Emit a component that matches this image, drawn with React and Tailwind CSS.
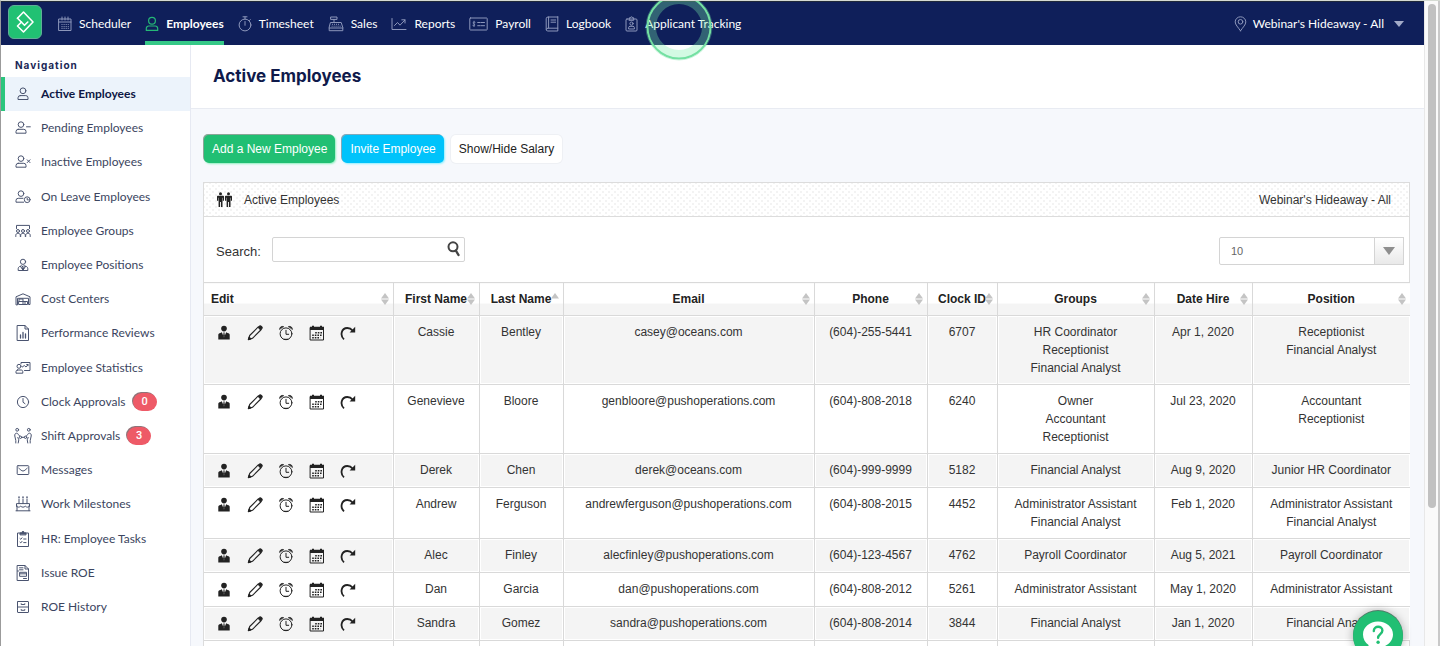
import React from "react";

function Svg({ w = 16, h = 16, sw = 1, className = "", children }) {
  return (
    <svg
      width={w}
      height={h}
      viewBox={`0 0 ${w} ${h}`}
      fill="none"
      stroke="currentColor"
      strokeWidth={sw}
      strokeLinecap="round"
      strokeLinejoin="round"
      aria-hidden="true"
      className={`shrink-0 ${className}`}
    >
      {children}
    </svg>
  );
}

/* Top bar icons */
const CalendarIcon = () => (
  <Svg w={14}>
    <path d="M1 3h12v11.5H1zM1 6h12M4 1v3M7 1v3M10 1v3" />
    <path d="M3.5 8.5h7.2M3.5 10.5h7.2M3.5 12.3h7.2" strokeDasharray="1 1.1" strokeLinecap="butt" strokeWidth="1.2" />
  </Svg>
);
const PersonIcon = () => (
  <Svg w={14} sw={1.2}>
    <circle cx="7" cy="4.8" r="3.4" />
    <path d="M3.7 10h6.6a2.4 2.4 0 0 1 2.4 2.4v2H1.3v-2A2.4 2.4 0 0 1 3.7 10z" />
  </Svg>
);
const StopwatchIcon = () => (
  <Svg w={14}>
    <circle cx="7" cy="9" r="5.9" />
    <path d="M5 .8h4M7 .8v2.3M7 5.5v3.8M11.3 4.6l1-1" />
  </Svg>
);
const RegisterIcon = () => (
  <Svg w={16}>
    <path d="M2.8 6.5h10.4l1.6 5v3.2H1.2v-3.2zM1.2 12h13.6M3 1h6v2.4H3zM6 3.4v3" />
    <path d="M4 8.3h8M3.6 10.2h9" strokeDasharray="1 1" strokeLinecap="butt" />
  </Svg>
);
const ChartIcon = () => (
  <Svg w={16}>
    <path d="M1 2.5v11h14" />
    <path d="M3.5 9.5l3-3 2.5 2.7L14 4M10.8 3.8H14V7" />
  </Svg>
);
const CheckIcon = () => (
  <Svg w={19}>
    <rect x=".8" y="2" width="17.4" height="12" rx=".6" />
    <path d="M6 6.2c-1.8-.8-2.6.9-1.2 1.6 1.6.7 1 2.6-.9 1.7M5 5.2v5.4" strokeWidth=".9" />
    <path d="M8.7 6.5h2.500M12.2 6.5h3.3M8.7 9.7h2.500M12.2 9.7h3.3" />
  </Svg>
);
const BookIcon = () => (
  <Svg w={14}>
    <path d="M12.8 1H3A1.8 1.8 0 0 0 1.2 2.8v10.4A1.6 1.6 0 0 0 2.8 15h10V1zM12.8 12.2H3a1.5 1.5 0 0 0-1.7 1.2M3.6 1v11M6 4h4.6M6 6.2h4.6" />
  </Svg>
);
const BadgeIcon = () => (
  <Svg w={13}>
    <rect x="1" y="3" width="11" height="12" rx="1" />
    <path d="M4.3 3V1.8h1.2a1 1 0 0 1 2 0h1.2V4.3H4.3z" />
    <circle cx="6.5" cy="7.6" r="1.6" />
    <path d="M3.6 12.6v-.9c0-.9.6-1.4 1.4-1.4h3c.8 0 1.4.5 1.4 1.4v.9z" />
  </Svg>
);
const PinIcon = () => (
  <Svg w={13}>
    <path d="M6.5 14.8C4 11.2 1.2 8.7 1.2 5.9a5.3 5.1 0 0 1 10.6 0c0 2.8-2.8 5.3-5.3 8.9z" />
    <circle cx="6.5" cy="5.8" r="2.3" />
  </Svg>
);

/* Sidebar icons, drawn on an 18px canvas */
const side = {
  active: (
    <>
      <circle cx="9" cy="5.8" r="2.9" />
      <path d="M6.2 10.6h5.6a2.2 2.2 0 0 1 2.2 2.2v1.7H4v-1.7a2.2 2.2 0 0 1 2.2-2.2z" />
    </>
  ),
  pending: (
    <>
      <circle cx="7" cy="5.6" r="2.8" />
      <path d="M4.2 10.3h5.6a2.2 2.2 0 0 1 2.2 2.2v1.7H2v-1.7a2.2 2.2 0 0 1 2.2-2.2zM12.5 7.8h3.8" />
    </>
  ),
  inactive: (
    <>
      <circle cx="7" cy="5.6" r="2.8" />
      <path d="M4.2 10.3h5.6a2.2 2.2 0 0 1 2.2 2.2v1.7H2v-1.7a2.2 2.2 0 0 1 2.2-2.2zM13.2 6.8l2.8 2.8M16 6.8l-2.8 2.8" />
    </>
  ),
  leave: (
    <>
      <circle cx="7" cy="5.6" r="2.8" />
      <path d="M9 10.3H4.2A2.2 2.2 0 0 0 2 12.5v1.7h7.6" />
      <circle cx="13.2" cy="11.7" r="2.9" />
      <path d="M13.2 10.2v1.7h1.2" />
    </>
  ),
  groups: (
    <>
      <path d="M2.5 6.5V3.4h13v3.1" />
      <circle cx="4" cy="9" r="1.5" />
      <circle cx="9" cy="9" r="1.5" />
      <circle cx="14" cy="9" r="1.5" />
      <path d="M1.8 14.5v-1.3c0-1 .7-1.7 1.5-1.7h1.4c.8 0 1.6.7 1.6 1.7v1.3M6.7 14.5v-1.3c0-1 .7-1.7 1.6-1.7h1.4c.9 0 1.6.7 1.6 1.7v1.3M11.7 14.5v-1.3c0-1 .7-1.7 1.6-1.7h1.4c.8 0 1.5.7 1.5 1.7v1.3" />
    </>
  ),
  positions: (
    <>
      <circle cx="9" cy="5.8" r="2.6" />
      <path d="M7.5 9.8L5.6 10.5C4.6 11 4.2 11.8 4.2 12.8v1.7h9.6v-1.7c0-1-.4-1.8-1.4-2.3l-1.9-.7M9 10l-1 1 1 3 1-3zM6.5 10.4L9 14.3l2.5-3.9" />
    </>
  ),
  cost: (
    <>
      <path d="M2 14.5V6.8L9 3.8l7 3v7.7h-1.5V8.3h-11v6.2z" />
      <path d="M5 14.5h8.5v-3H5zM5 11.5V9h4v5.5M11 11.5v3" />
    </>
  ),
  reviews: (
    <>
      <path d="M3.5 1.5h7.5l3.5 3.5v11.5h-11zM11 1.5V5h3.5" />
      <path d="M6.5 11v3M9 8.5V14M11.5 10v4" strokeWidth="1.3" />
    </>
  ),
  stats: (
    <>
      <path d="M7 4.8V3.5h9v8H10.5" />
      <circle cx="5" cy="7.3" r="2" />
      <path d="M3.5 11h3.6c1 0 1.7.7 1.7 1.7v1.5H2v-1.5C2 11.7 2.6 11 3.5 11zM8.3 8l2-1.5L12 8l2-2.3M12.7 5.5H14v1.3" />
    </>
  ),
  clock: (
    <>
      <circle cx="9" cy="9" r="5.6" />
      <path d="M9 5.5V9.2l2 1.5" />
    </>
  ),
  shift: (
    <>
      <circle cx="3.2" cy="2.8" r="1.4" />
      <circle cx="14.8" cy="2.8" r="1.4" />
      <path d="M1.8 16v-2.5L.8 9C.5 7.300 1.3 6.200 2.600 6.200c1 0 1.500.7 1.700 1.500L6 9.300M4.200 16l.6-3.200-1-2.300M16.200 16v-2.500l1-4.500c.3-1.700-.5-2.800-1.800-2.800-1 0-1.500.7-1.700 1.500L12 9.300M13.800 16l-.6-3.200 1-2.300" />
      <circle cx="6.500" cy="10.300" r="1.200" />
      <circle cx="11.500" cy="10.300" r="1.200" />
      <path d="M7.800 10.300h2.400" />
    </>
  ),
  mail: (
    <>
      <rect x="3.2" y="4.7" width="11.6" height="8.8" rx=".8" />
      <path d="M4.8 7.2c1.6 1.2 2.6 2.8 4.2 2.8s2.6-1.6 4.2-2.8" />
    </>
  ),
  cake: (
    <>
      <path d="M2.5 11.2V8.6h13v2.6M2 15.8h14M3 11v4.7M15 11v4.7M2.5 11.2c1.6 1.3 2.6 1.3 4.2 0 1.6 1.3 3 1.3 4.6 0 1.6 1.3 2.6 1.3 4.2 0M5 8.5V4M9 8.5V4M13 8.5V4" />
      <path d="M5 2.600V2M9 2.600V2M13 2.600V2" strokeWidth="1.5" />
    </>
  ),
  tasks: (
    <>
      <path d="M5.8 3H3.5v13.5h11V3h-2.3" />
      <path d="M6 4.5V2.8h1.7a1.3 1.3 0 0 1 2.6 0H12v1.7z" fill="currentColor" />
      <path d="M6 8.6l.8.7 1.2-1.5M6 12.2l.8.7 1.2-1.5M9.7 9h2.3M9.7 12.6h2.3" />
    </>
  ),
  roe: (
    <path d="M3.5 1.5h7.5l3.5 3.5v11.5h-11zM11 1.5V5h3.5M5.5 3.8H9M5.5 5.8H9M6 8.3h6.5v4H6zM6 9.8h6.5M9.5 14.5h3M3.5 7h1" />
  ),
  history: (
    <>
      <rect x="3.5" y="3.5" width="11" height="11" rx=".5" />
      <path d="M3.5 9h11M7.2 5.7v.8h3.600v-.8M7.2 11.5v.8h3.600v-.8" />
    </>
  ),
};

const TOP_NAV = [
  { label: "Scheduler", icon: <CalendarIcon /> },
  { label: "Employees", icon: <PersonIcon />, active: true },
  { label: "Timesheet", icon: <StopwatchIcon /> },
  { label: "Sales", icon: <RegisterIcon /> },
  { label: "Reports", icon: <ChartIcon /> },
  { label: "Payroll", icon: <CheckIcon /> },
  { label: "Logbook", icon: <BookIcon /> },
  { label: "Applicant Tracking", icon: <BadgeIcon /> },
];

const SIDE_NAV = [
  ["active", "Active Employees"],
  ["pending", "Pending Employees"],
  ["inactive", "Inactive Employees"],
  ["leave", "On Leave Employees"],
  ["groups", "Employee Groups"],
  ["positions", "Employee Positions"],
  ["cost", "Cost Centers"],
  ["reviews", "Performance Reviews"],
  ["stats", "Employee Statistics"],
  ["clock", "Clock Approvals", "0"],
  ["shift", "Shift Approvals", "3"],
  ["mail", "Messages"],
  ["cake", "Work Milestones"],
  ["tasks", "HR: Employee Tasks"],
  ["roe", "Issue ROE"],
  ["history", "ROE History"],
];

const EMPLOYEES = [
  ["Cassie", "Bentley", "casey@oceans.com", "(604)-255-5441", "6707", ["HR Coordinator", "Receptionist", "Financial Analyst"], "Apr 1, 2020", ["Receptionist", "Financial Analyst"]],
  ["Genevieve", "Bloore", "genbloore@pushoperations.com", "(604)-808-2018", "6240", ["Owner", "Accountant", "Receptionist"], "Jul 23, 2020", ["Accountant", "Receptionist"]],
  ["Derek", "Chen", "derek@oceans.com", "(604)-999-9999", "5182", ["Financial Analyst"], "Aug 9, 2020", ["Junior HR Coordinator"]],
  ["Andrew", "Ferguson", "andrewferguson@pushoperations.com", "(604)-808-2015", "4452", ["Administrator Assistant", "Financial Analyst"], "Feb 1, 2020", ["Administrator Assistant", "Financial Analyst"]],
  ["Alec", "Finley", "alecfinley@pushoperations.com", "(604)-123-4567", "4762", ["Payroll Coordinator"], "Aug 5, 2021", ["Payroll Coordinator"]],
  ["Dan", "Garcia", "dan@pushoperations.com", "(604)-808-2012", "5261", ["Administrator Assistant"], "May 1, 2020", ["Administrator Assistant"]],
  ["Sandra", "Gomez", "sandra@pushoperations.com", "(604)-808-2014", "3844", ["Financial Analyst"], "Jan 1, 2020", ["Financial Analyst"]],
];

const COLUMNS = [
  ["Edit", "w-[189px]"],
  ["First Name", "w-[86px]"],
  ["Last Name", "w-[84px]"],
  ["Email", "w-[251px]"],
  ["Phone", "w-[113px]"],
  ["Clock ID", "w-[70px]"],
  ["Groups", "w-[157px]"],
  ["Date Hire", "w-[98px]"],
  ["Position", "w-[158px]"],
];

/* Row action icons */
const ACTIONS = [
  [
    "Profile",
    <Svg key="p">
      <g fill="currentColor" stroke="none">
        <circle cx="8" cy="3.6" r="2.8" />
        <path fillRule="evenodd" d="M2.3 14.5V9.800c0-.9.7-1.600 1.600-1.600L5.800 7.300 8 12.500 10.200 7.300l1.900.9c.9 0 1.600.7 1.600 1.600v4.700z" />
        <path d="M7.300 7.600h1.400l-.2 1.200.5 2.200L8 12.600 7 11l.5-2.200z" />
      </g>
    </Svg>,
  ],
  [
    "Edit",
    <Svg key="e" sw={1.1}>
      <path d="M1.5 14.5l1.2-4L11 2.2l2.800 2.800-8.300 8.300z" />
      <path d="M11.7 1.7l.7-.6c.5-.5 1.2-.3 1.6.1l.8.8c.4.4.5 1 .1 1.5l-.7.8z" fill="currentColor" />
      <path d="M1.300 14.700l.8-2.600 1.800 1.800z" fill="currentColor" />
    </Svg>,
  ],
  [
    "Clock",
    <Svg key="c">
      <circle cx="8" cy="8.800" r="5.900" />
      <path d="M8 5.300v4h2.700" />
      <path d="M1.500 4.200C1.700 2 3.500.9 5.500 1.500zM14.500 4.200C14.300 2 12.500.9 10.500 1.500z" fill="currentColor" strokeWidth=".6" />
      <path d="M6 14.300h4" />
    </Svg>,
  ],
  [
    "Schedule",
    <Svg key="s">
      <path d="M1.500 2.500h13v12.500h-13z" strokeLinejoin="miter" />
      <path d="M1 1.800h2V.8h2v1h6v-1h2v1h2v3.200H1z" fill="currentColor" stroke="none" />
      <path d="M6.200 7.800h7M3.200 10.300h10M3.200 12.800h8" strokeWidth="1.500" strokeDasharray="1.600 1" strokeLinecap="butt" />
    </Svg>,
  ],
  [
    "Redo",
    <Svg key="r" sw={1.8}>
      <path d="M4 14.300C-.3 10.500 1.300 3 7.300 3c2.200 0 4 .9 5.200 2.500" strokeLinecap="butt" />
      <path d="M15.200 1.800v5.600H9.600z" fill="currentColor" stroke="none" />
    </Svg>,
  ],
];

function SortMark({ up }) {
  return (
    <svg width="8" height="12" viewBox="0 0 8 12" fill="#c4c4c4" aria-hidden="true" className="absolute right-[4px] top-[10px]">
      <path d="M4 0l4 5.400H0z" />
      {!up && <path d="M4 12L0 6.600h8z" />}
    </svg>
  );
}

function TopBar() {
  return (
    <header className="relative flex h-11 shrink-0 items-stretch border-t border-[#20293a] bg-[#0f1f5a] pl-[7px] pr-5 font-['Lato',sans-serif] text-[12px] text-white">
      <a href="#home" aria-label="Home" className="mt-[3px] flex size-[34px] items-center justify-center rounded-[6px] border border-[#5fae97] bg-[#21c173]">
        <svg width="20" height="24" viewBox="0 0 20 24" fill="none" stroke="#fff" strokeWidth="1.600" strokeLinejoin="round" strokeLinecap="round" aria-hidden="true">
          <path d="M2.500 8.200L8.500 2 18 12 8.500 22 2.500 16 6.500 12" />
          <path d="M2.500 8.200L9.500 15.300 12.800 12" />
        </svg>
      </a>
      <nav className="ml-4 flex gap-[14px]">
        {TOP_NAV.map((n) => (
          <a
            key={n.label}
            href={"#" + n.label.toLowerCase().replace(" ", "-")}
            className={
              n.active
                ? "flex items-center gap-[7px] border-y-4 border-t-transparent border-b-[#35c887] font-bold"
                : "flex items-center gap-[7px] border-y-4 border-transparent"
            }
          >
            <span className={n.active ? "text-[#25b877]" : "text-[#8d97bb]"}>{n.icon}</span>
            {n.label}
          </a>
        ))}
      </nav>
      <button type="button" className="ml-auto flex items-center gap-[6px]">
        <span className="text-[#8d97bb]"><PinIcon /></span>
        Webinar&apos;s Hideaway - All
        <svg width="10" height="6" viewBox="0 0 10 6" fill="#a3abc8" aria-hidden="true" className="ml-1"><path d="M0 0h10L5 6z" /></svg>
      </button>
      <svg width="68" height="68" viewBox="0 0 68 68" fill="none" aria-hidden="true" className="pointer-events-none absolute left-[644px] -top-[9px] z-10">
        <circle cx="34" cy="34" r="27.500" stroke="#79f1a9" strokeOpacity=".33" strokeWidth="9" />
        <circle cx="34" cy="34" r="31.500" stroke="#74e0a2" strokeWidth="2" />
        <circle cx="34" cy="34" r="33" stroke="#74e0a2" strokeOpacity=".35" strokeWidth="1" />
      </svg>
    </header>
  );
}

function Sidebar() {
  return (
    <aside className="flex w-[190px] shrink-0 flex-col border-r border-[#e6e9f2] bg-white pb-[22px] font-['Lato',sans-serif] text-[12px] text-[#3b4560]">
      <h2 className="flex h-8 items-center pl-[14px] pt-2 font-['Inter',sans-serif] text-[10px] font-bold tracking-widest text-[#1b2756]">Navigation</h2>
      <ul className="flex flex-1 flex-col">
        {SIDE_NAV.map(([id, label, count], i) => (
          <li key={id} className="flex min-h-[34px] flex-1">
            <a
              href={"#" + id}
              className={
                i === 0
                  ? "flex flex-1 items-center gap-[9px] border-l-4 border-[#2bc57d] bg-[#ecf3fb] pl-[9px] font-bold text-[#0d1644]"
                  : "flex flex-1 items-center gap-[9px] pl-[13px]"
              }
            >
              <Svg w={18} h={18} className="text-[#4a5470]">{side[id]}</Svg>
              {label}
              {count && (
                <span className="-ml-[2px] flex h-[18px] w-6 items-center justify-center rounded-full bg-[#ee5a67] font-['Roboto',sans-serif] text-[11px] font-medium text-white shadow-[-1px_-1px_0_#8f7479]">{count}</span>
              )}
            </a>
          </li>
        ))}
      </ul>
    </aside>
  );
}

function EmployeeTable() {
  return (
    <table className="w-full table-fixed border-collapse text-center text-[12px] leading-[18px] text-[#333]">
      <thead>
        <tr>
          {COLUMNS.map(([label, width], i) => (
            <th
              key={label}
              scope="col"
              className={`${width} relative h-[33px] whitespace-nowrap border border-[#d9d9d9] bg-[linear-gradient(#fff_64%,#f4f4f4_64%)] p-0 font-bold text-[#222] first:border-l-0 first:pl-[7px] first:text-left last:border-r-0`}
            >
              {label}
              <SortMark up={i === 2} />
            </th>
          ))}
        </tr>
      </thead>
      <tbody>
        {EMPLOYEES.map((e) => (
          <tr key={e[2]} className="align-top odd:bg-[#f4f4f4] [&>td]:border [&>td]:border-[#d9d9d9] [&>td]:py-[7px] [&>td]:shadow-[inset_0_0_0_1px_#fff] [&>td:first-child]:border-l-0 [&>td:last-child]:border-r-0">
            <td>
              <div className="flex h-[19px] items-center gap-[15px] pl-3 text-[#222]">
                {ACTIONS.map(([name, icon]) => (
                  <button key={name} type="button" aria-label={name}>{icon}</button>
                ))}
              </div>
            </td>
            {e.map((value, i) => (
              <td key={i}>
                {Array.isArray(value) ? value.map((v) => <div key={v}>{v}</div>) : value}
              </td>
            ))}
          </tr>
        ))}
        <tr className="h-[34px] [&>td]:border [&>td]:border-[#d9d9d9] [&>td:first-child]:border-l-0 [&>td:last-child]:border-r-0">
          {COLUMNS.map(([label]) => <td key={label} />)}
        </tr>
      </tbody>
    </table>
  );
}

function Content() {
  return (
    <main className="min-w-0 flex-1 overflow-hidden bg-[#f6f8fc] font-['Liberation_Sans',sans-serif] text-[12px] text-[#333]">
      <div className="flex h-16 items-center border-b border-[#e8ebf2] bg-white pl-[22px]">
        <h1 className="font-['Inter',sans-serif] text-[17px] font-bold text-[#0f1a4b]">Active Employees</h1>
      </div>
      <div className="pl-3 pr-[14px] pt-[26px]">
        <div className="flex gap-[7px] pl-px">
          <button type="button" className="h-7 rounded-[5px] bg-[#21bf73] px-2 text-white shadow-[-1px_-1px_0_#8aa697,1px_1px_2px_#8ff0bf]">Add a New Employee</button>
          <button type="button" className="h-7 rounded-[5px] bg-[#00c3fb] px-2 text-white shadow-[-1px_-1px_0_#7fa9bb,1px_1px_2px_#8ff0ff]">Invite Employee</button>
          <button type="button" className="h-7 rounded-[5px] bg-white px-2 text-[#222] shadow-[0_0_0_1px_#eef0f4]">Show/Hide Salary</button>
        </div>
        <section className="mt-[19px] border border-[#dcdcdc] bg-white">
          <div className="flex h-[34px] items-center justify-between border-b border-[#dcdcdc] bg-[radial-gradient(#f3f3f3_1px,transparent_1px),radial-gradient(#f3f3f3_1px,transparent_1px)] bg-[size:6px_6px] bg-[position:0_0,3px_3px] pl-3 pr-[18px]">
            <div className="flex items-center gap-[11px]">
              <svg width="17" height="16" viewBox="0 0 17 16" fill="#222" aria-hidden="true">
                <circle cx="4.500" cy="1.800" r="1.500" />
                <circle cx="12.500" cy="1.800" r="1.500" />
                <path d="M2 3.800h5c.7 0 1 .4 1 1v4H6.900v-3h-.4V15H5v-5h-.9v5H2.600V5.800h-.4v3H1v-4c0-.6.3-1 1-1zM10 3.800h5c.7 0 1 .4 1 1v4h-1.100v-3h-.4V15H13v-5h-.9v5h-1.500V5.800h-.4v3H9v-4c0-.6.300-1 1-1z" />
              </svg>
              <h2>Active Employees</h2>
            </div>
            <span>Webinar&apos;s Hideaway - All</span>
          </div>
          <div className="flex items-start justify-between pb-[17px] pl-3 pr-[5px] pt-5">
            <label className="flex items-center gap-[11px] text-[13px]">
              <span className="pt-1">Search:</span>
              <span className="relative flex">
                <input type="text" className="h-[25px] w-[193px] rounded-[2px] border border-[#d4d4d4] bg-white pl-2 pr-7 text-[12px] outline-none" />
                <svg width="14" height="16" viewBox="0 0 14 16" fill="none" stroke="#444" aria-hidden="true" className="pointer-events-none absolute right-1 top-1">
                  <circle cx="6" cy="5.800" r="4.500" strokeWidth="2" />
                  <path d="M8.800 9.500l2.700 4.500" strokeWidth="2.400" strokeLinecap="round" />
                </svg>
              </span>
            </label>
            <div className="relative flex">
              <select aria-label="Rows per page" defaultValue="10" className="h-7 w-[185px] appearance-none rounded-[2px] border border-[#d4d4d4] bg-white pl-[11px] pr-8 text-[11px] text-[#666] outline-none">
                <option>10</option>
              </select>
              <span className="pointer-events-none absolute inset-y-0 right-0 flex w-[30px] items-center justify-center border border-[#d4d4d4] bg-gradient-to-b from-white to-[#e9e9e9]">
                <svg width="12" height="8" viewBox="0 0 12 8" fill="#8e8e8e" aria-hidden="true"><path d="M0 0h12L6 8z" /></svg>
              </span>
            </div>
          </div>
          <EmployeeTable />
        </section>
      </div>
    </main>
  );
}

export default function App() {
  return (
    <div className="flex h-screen overflow-hidden border-l border-t border-l-[#9b9b9b] border-t-[#d5dbd3] bg-white">
      <div className="relative flex min-w-0 flex-1 flex-col">
        <TopBar />
        <div className="flex min-h-0 flex-1">
          <Sidebar />
          <Content />
        </div>
        <button
          type="button"
          aria-label="Help"
          className="absolute -bottom-[15px] right-[21px] z-10 flex size-[50px] items-center justify-center rounded-full bg-[#21bf73] shadow-[0_0_10px_rgba(0,0,0,0.3),0_-1px_0_#5c8f78]"
        >
          <svg width="32" height="32" viewBox="0 0 32 32" aria-hidden="true">
            <path d="M16 1.500c8.300 0 15 5.600 15 13 0 7.300-6.700 13-15 13-1.200 0-2.500 0-3.700-.4L6 30.500l.6-5.600C3 22.600 1 18.800 1 14.500c0-7.400 6.700-13 15-13z" fill="#fff" />
            <path d="M11.800 11c0-5.600 8.600-5.600 8.600-.4 0 3.500-4.300 3.500-4.300 7.200" fill="none" stroke="#21bf73" strokeWidth="2.400" strokeLinecap="round" />
            <circle cx="16.100" cy="22.300" r="1.700" fill="#21bf73" />
          </svg>
        </button>
      </div>
      <div aria-hidden="true" className="flex w-4 shrink-0 justify-center border-l border-r-2 border-l-[#e8e8e8] border-r-[#c9c9c9] bg-[#fafafa] pt-[3px]">
        <div className="h-[504px] w-2 rounded-full bg-[#c1c1c1]" />
      </div>
    </div>
  );
}
